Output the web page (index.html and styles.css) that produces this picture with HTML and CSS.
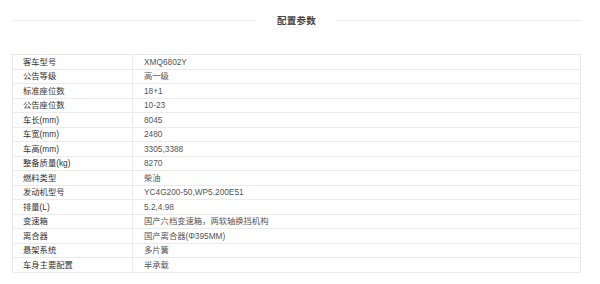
FILE: index.html
```html
<!DOCTYPE html>
<html lang="zh-CN">
<head>
<meta charset="utf-8">
<title>配置参数</title>
<link rel="stylesheet" href="styles.css">
</head>
<body>
<div class="wrap">
  <div class="head"><span class="title">配置参数</span></div>
  <table class="spec">
    <colgroup><col class="c1"><col class="c2"></colgroup>
    <tbody>
      <tr><th>客车型号</th><td>XMQ6802Y</td></tr>
      <tr><th>公告等级</th><td>高一级</td></tr>
      <tr><th>标准座位数</th><td>18+1</td></tr>
      <tr><th>公告座位数</th><td>10-23</td></tr>
      <tr><th>车长(mm)</th><td>8045</td></tr>
      <tr><th>车宽(mm)</th><td>2480</td></tr>
      <tr><th>车高(mm)</th><td>3305,3388</td></tr>
      <tr><th>整备质量(kg)</th><td>8270</td></tr>
      <tr><th>燃料类型</th><td>柴油</td></tr>
      <tr><th>发动机型号</th><td>YC4G200-50,WP5.200E51</td></tr>
      <tr><th>排量(L)</th><td>5.2,4.98</td></tr>
      <tr><th>变速箱</th><td>国产六档变速箱，两软轴换挡机构</td></tr>
      <tr><th>离合器</th><td>国产离合器(Φ395MM)</td></tr>
      <tr><th>悬架系统</th><td>多片簧</td></tr>
      <tr><th>车身主要配置</th><td>半承载</td></tr>
    </tbody>
  </table>
</div>
</body>
</html>
```

FILE: styles.css
```css
html, body {
  margin: 0;
  padding: 0;
  background: #fff;
}
body {
  font-family: "Liberation Sans", "Noto Sans CJK SC", sans-serif;
  color: #333;
}
.wrap {
  width: 569px;
  margin-left: 12px;
}
.head {
  height: 40px;
  display: flex;
  align-items: center;
  gap: 20px;
}
.head::before,
.head::after {
  content: "";
  flex: 1;
  height: 1px;
  background: #ececec;
}
.title {
  font-size: 9.5px;
  font-weight: bold;
  color: #444;
  line-height: 12px;
  padding-top: 3px;
  padding-bottom: 0;
  letter-spacing: 0.2px;
  border-bottom: 1px solid #f6f6f6;
}
.spec {
  margin-top: 14px;
  width: 569px;
  table-layout: fixed;
  border-collapse: collapse;
  border: 1px solid #e8e8e8;
  font-size: 8.3px;
}
.c1 { width: 120px; }
.spec tr { height: 14.5px; }
.spec th,
.spec td {
  padding: 0;
  border-bottom: 1px solid #ebebeb;
  text-align: left;
  line-height: 10px;
  white-space: nowrap;
}
.spec th {
  padding-left: 10px;
  font-weight: normal;
  color: #333;
  border-right: 1px solid #ebebeb;
}
.spec td {
  padding-left: 11px;
  color: #555;
}
```
